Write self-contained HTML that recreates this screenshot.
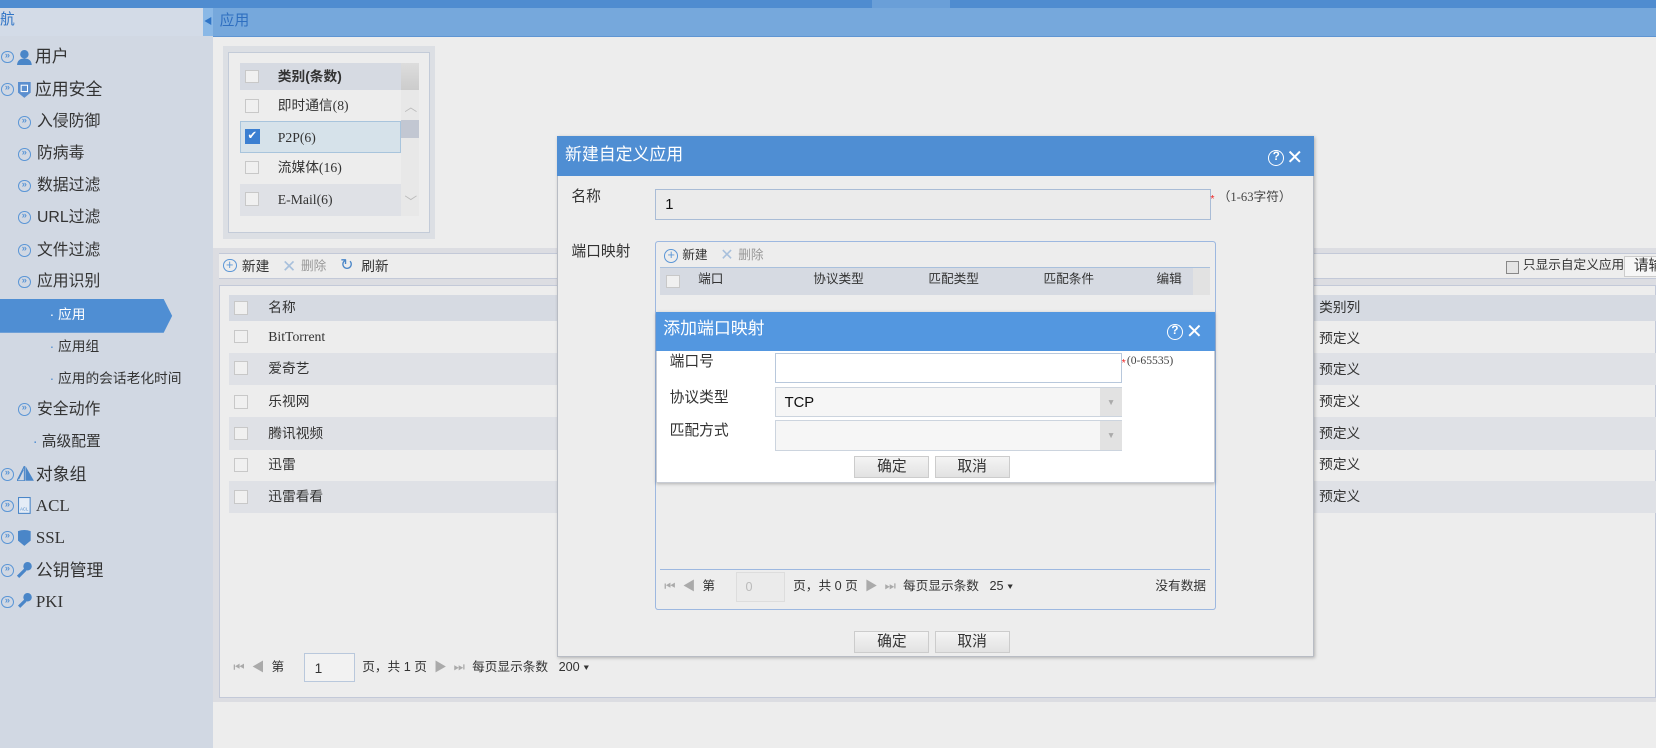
<!DOCTYPE html>
<html><head><meta charset="utf-8"><style>
*{margin:0;padding:0;box-sizing:border-box}
html,body{width:1656px;height:748px;overflow:hidden;background:#ededed}
#w{zoom:1.05612;width:1568px;height:708px;position:relative;font-family:"Liberation Sans","Noto Sans CJK SC",sans-serif;font-size:13px;line-height:1.25;color:#333;background:#ededed}
.a{position:absolute}
.sf{font-family:"Liberation Serif","Noto Sans CJK SC",serif}
.cb{position:absolute;width:13px;height:13px;border:1px solid #c8c8c8;background:#f0f0f0}
.circ{position:absolute;width:12px;height:12px;border:1.5px solid #5b96d6;border-radius:50%;font-size:9px;color:#5b96d6;line-height:8px;text-align:center;font-weight:bold}
.sb{position:absolute;font-size:15px;color:#333}
.btn{position:absolute;height:21px;width:71px;border:1px solid #ccc;background:linear-gradient(#f4f4f4,#e2e2e2);text-align:center;line-height:19px;font-size:14px;color:#333}
.pgr{position:absolute;font-size:12px;color:#333;white-space:nowrap}
</style></head><body><div id="w">
<div class="a" style="left:0;top:0;width:1568px;height:8px;background:#4f8cd0"></div>
<div class="a" style="left:826px;top:0;width:74px;height:8px;background:#6a9fd8"></div>
<div class="a" style="left:0;top:8px;width:202px;height:700px;background:#d1d8e3"></div>
<div class="a" style="left:0;top:8px;width:192px;height:26px;background:#d3dbe7;color:#2f74c6;font-size:14px;line-height:24px">航</div>
<div class="a" style="left:192px;top:8px;width:10px;height:26px;background:#8ab8e6;color:#2f74c6;font-size:8px;line-height:26px;text-align:center">◀</div>

<div class="circ" style="left:1px;top:48px">»</div>
<svg class="a" style="left:16px;top:46px" width="14" height="16"><circle cx="7" cy="5" r="4" fill="#4a86c8"/><path d="M0 16 Q0 9 7 9 Q14 9 14 16Z" fill="#4a86c8"/></svg>
<div class="sb" style="left:33px;top:44px;font-size:16px">用户</div>
<div class="circ" style="left:1px;top:79px">»</div>
<svg class="a" style="left:17px;top:77px" width="12" height="16"><path d="M0 1 H12 V11 L6 16 L0 11Z" fill="#5b8fcf"/><rect x="3" y="4" width="6" height="6" fill="none" stroke="#fff" stroke-width="1"/></svg>
<div class="sb" style="left:33px;top:75px;font-size:16px">应用安全</div>
<div class="circ" style="left:17px;top:110px">»</div><div class="sb" style="left:35px;top:106px">入侵防御</div>
<div class="circ" style="left:17px;top:140px">»</div><div class="sb" style="left:35px;top:136px">防病毒</div>
<div class="circ" style="left:17px;top:170px">»</div><div class="sb" style="left:35px;top:167px">数据过滤</div>
<div class="circ" style="left:17px;top:200px">»</div><div class="sb" style="left:35px;top:197px">URL过滤</div>
<div class="circ" style="left:17px;top:231px">»</div><div class="sb" style="left:35px;top:228px">文件过滤</div>
<div class="circ" style="left:17px;top:261px">»</div><div class="sb" style="left:35px;top:258px">应用识别</div>
<svg class="a" style="left:0;top:283px" width="164" height="32"><path d="M0 0 H155 L163 16 L155 32 H0Z" fill="#4f8ed3"/></svg>
<div class="sb" style="left:47px;top:290px;font-size:13px;color:#fff">· 应用</div>
<div class="sb" style="left:47px;top:320px;font-size:13px"><span style="color:#4f8ed3">·</span> 应用组</div>
<div class="sb" style="left:47px;top:350px;font-size:13px"><span style="color:#4f8ed3">·</span> 应用的会话老化时间</div>
<div class="circ" style="left:17px;top:382px">»</div><div class="sb" style="left:35px;top:379px">安全动作</div>
<div class="sb" style="left:31px;top:410px;font-size:14px"><span style="color:#4f8ed3">·</span> 高级配置</div>
<div class="circ" style="left:1px;top:443px">»</div>
<svg class="a" style="left:16px;top:441px" width="16" height="14"><path d="M0 14 L7 0 V14Z M1.5 12.5 L6 3.5" fill="none" stroke="#4a86c8"/><path d="M8 0 L16 14 H8Z" fill="#4a86c8"/></svg>
<div class="sb" style="left:34px;top:439px;font-size:16px">对象组</div>
<div class="circ" style="left:1px;top:473px">»</div>
<svg class="a" style="left:17px;top:471px" width="12" height="16"><rect x="0.5" y="0.5" width="11" height="15" fill="#e4ecf6" stroke="#4a86c8"/><text x="2" y="13" font-size="4" fill="#4a86c8">ACL</text></svg>
<div class="sb sf" style="left:34px;top:469px;font-size:16px">ACL</div>
<div class="circ" style="left:1px;top:503px">»</div>
<svg class="a" style="left:17px;top:501px" width="12" height="16"><path d="M0 2 Q6 0 12 2 V11 L6 16 L0 11Z" fill="#4a86c8"/></svg>
<div class="sb sf" style="left:34px;top:499px;font-size:16px">SSL</div>
<div class="circ" style="left:1px;top:534px">»</div>
<svg class="a" style="left:16px;top:531px" width="16" height="16"><circle cx="10" cy="5" r="4" fill="#4a86c8"/><path d="M8 8 L1 15" stroke="#4a86c8" stroke-width="3"/></svg>
<div class="sb" style="left:34px;top:530px;font-size:16px">公钥管理</div>
<div class="circ" style="left:1px;top:564px">»</div>
<svg class="a" style="left:16px;top:561px" width="16" height="16"><circle cx="10" cy="5" r="4" fill="#4a86c8"/><path d="M8 8 L2 14" stroke="#4a86c8" stroke-width="3"/></svg>
<div class="sb sf" style="left:34px;top:560px;font-size:16px">PKI</div>

<div class="a" style="left:202px;top:8px;width:1366px;height:27px;background:#76a8dc;border-bottom:1px solid #5f95d2"></div>
<div class="a" style="left:208px;top:11px;font-size:14px;color:#2f6fc0">应用</div>

<div class="a" style="left:211px;top:44px;width:201px;height:182px;background:#dcdfe4"></div>
<div class="a" style="left:216px;top:49px;width:191px;height:172px;border:1px solid #c3cbd8;background:#ededed"></div>
<div class="a" style="left:227px;top:60px;width:153px;height:25px;background:#d6dae2"></div>
<div class="a" style="left:380px;top:60px;width:17px;height:145px;background:#e8e8e8"></div>
<div class="a" style="left:380px;top:60px;width:17px;height:25px;background:linear-gradient(#ddd,#ccc)"></div>
<div class="a" style="left:380px;top:114px;width:17px;height:17px;background:#c2c7d2"></div>
<div class="a" style="left:383px;top:95px;font-size:12px;color:#bbb">︿</div>
<div class="a" style="left:383px;top:185px;font-size:12px;color:#bbb">﹀</div>
<div class="cb" style="left:232px;top:66px"></div><div class="a" style="left:263px;top:64px;font-weight:bold;font-size:13px">类别(条数)</div>
<div class="cb" style="left:232px;top:94px"></div><div class="a sf" style="left:263px;top:92px;font-size:13px">即时通信(8)</div>
<div class="a" style="left:227px;top:115px;width:153px;height:30px;background:#d6e2ea;border:1px solid #a8c4dc"></div>
<div class="a" style="left:232px;top:122px;width:14px;height:14px;background:#3b7fd1;color:#fff;font-size:11px;text-align:center;line-height:14px">✔</div>
<div class="a sf" style="left:263px;top:122px;font-size:13px">P2P(6)</div>
<div class="cb" style="left:232px;top:152px"></div><div class="a sf" style="left:263px;top:151px;font-size:13px">流媒体(16)</div>
<div class="a" style="left:227px;top:174px;width:153px;height:31px;background:#dfe1e6"></div>
<div class="cb" style="left:232px;top:182px"></div><div class="a sf" style="left:263px;top:181px;font-size:13px">E-Mail(6)</div>

<div class="a" style="left:202px;top:235px;width:1366px;height:430px;background:#dcdde2"></div>
<div class="a" style="left:207px;top:240px;width:1361px;height:24px;background:#ededed;border-top:1px solid #c3c9d8;border-bottom:1px solid #c3c9d8"></div>
<div class="circ" style="left:211px;top:245px;width:13px;height:13px;font-size:12px;line-height:10px;font-weight:normal">+</div>
<div class="a" style="left:229px;top:244px">新建</div>
<div class="a" style="left:267px;top:242px;color:#a8c0dc;font-size:16px">✕</div><div class="a" style="left:285px;top:245px;color:#999;font-size:12px">删除</div>
<div class="a" style="left:322px;top:242px;color:#4a86c8;font-size:15px">↻</div><div class="a" style="left:342px;top:244px">刷新</div>
<div class="a" style="left:1426px;top:247px;width:12px;height:12px;border:1px solid #888;background:#e4e4e4"></div>
<div class="a" style="left:1442px;top:244px;font-size:12px">只显示自定义应用</div>
<div class="a" style="left:1538px;top:242px;width:40px;height:20px;border:1px solid #ccc;background:#f6f6f6;font-size:14px;padding-left:8px">请输</div>

<div class="a" style="left:207px;top:270px;width:1361px;height:391px;background:#ededed;border:1px solid #c3c9d8"></div>
<div class="a" style="left:217px;top:279px;width:1351px;height:25px;background:#d6dae2"></div>
<div class="cb" style="left:222px;top:285px"></div><div class="a" style="left:254px;top:283px">名称</div><div class="a" style="left:1249px;top:283px">类别列</div>
<div class="a" style="left:217px;top:334px;width:1351px;height:31px;background:#dfe1e6"></div>
<div class="a" style="left:217px;top:395px;width:1351px;height:31px;background:#dfe1e6"></div>
<div class="a" style="left:217px;top:455px;width:1351px;height:31px;background:#dfe1e6"></div>
<div class="cb" style="left:222px;top:312px"></div><div class="a sf" style="left:254px;top:311px;font-size:13px">BitTorrent</div><div class="a" style="left:1249px;top:312px">预定义</div>
<div class="cb" style="left:222px;top:342px"></div><div class="a" style="left:254px;top:341px">爱奇艺</div><div class="a" style="left:1249px;top:342px">预定义</div>
<div class="cb" style="left:222px;top:374px"></div><div class="a" style="left:254px;top:372px">乐视网</div><div class="a" style="left:1249px;top:372px">预定义</div>
<div class="cb" style="left:222px;top:404px"></div><div class="a" style="left:254px;top:402px">腾讯视频</div><div class="a" style="left:1249px;top:402px">预定义</div>
<div class="cb" style="left:222px;top:434px"></div><div class="a" style="left:254px;top:432px">迅雷</div><div class="a" style="left:1249px;top:432px">预定义</div>
<div class="cb" style="left:222px;top:464px"></div><div class="a" style="left:254px;top:462px">迅雷看看</div><div class="a" style="left:1249px;top:462px">预定义</div>
<div class="pgr" style="left:221px;top:625px;color:#aaa">⏮ &nbsp;◀ &nbsp;<span style="color:#333">第</span></div>
<div class="a" style="left:288px;top:618px;width:48px;height:28px;border:1px solid #b9c8dc;background:#f2f2f2;padding:6px 0 0 9px">1</div>
<div class="pgr" style="left:343px;top:625px">页，共 1 页 &nbsp;<span style="color:#aaa">▶ &nbsp;⏭</span> &nbsp;每页显示条数 &nbsp; 200 ▾</div>

<div class="a" style="left:527px;top:129px;width:717px;height:493px;background:#ededed;border:1px solid #b8bcc4;box-shadow:1px 1px 3px rgba(0,0,0,.25)"></div>
<div class="a" style="left:527px;top:129px;width:717px;height:38px;background:#4f8ed3"></div>
<div class="a" style="left:535px;top:136px;font-size:16px;color:#fff">新建自定义应用</div>
<div class="a" style="left:1201px;top:142px;width:15px;height:15px;border:1.5px solid #fff;border-radius:50%;color:#fff;font-size:11px;text-align:center;line-height:12px;font-weight:bold">?</div>
<div class="a" style="left:1218px;top:138px;color:#fff;font-size:19px">✕</div>
<div class="a" style="left:541px;top:178px;font-size:14px">名称</div>
<div class="a" style="left:620px;top:179px;width:527px;height:29px;border:1px solid #a9bcd6;background:#ebebeb;padding:6px 0 0 9px;font-size:14px;color:#111">1</div>
<div class="a" style="left:1146px;top:183px;color:#e22;font-size:10px">*</div>
<div class="a sf" style="left:1153px;top:180px;font-size:12px;color:#444">（1-63字符）</div>
<div class="a" style="left:541px;top:230px;font-size:14px">端口映射</div>
<div class="a" style="left:620px;top:228px;width:531px;height:350px;border:1px solid #9db8e0;border-radius:3px"></div>
<div class="circ" style="left:629px;top:236px;width:13px;height:13px;font-size:12px;line-height:10px;font-weight:normal">+</div>
<div class="a" style="left:646px;top:235px;font-size:12px">新建</div>
<div class="a" style="left:682px;top:233px;color:#a8c0dc;font-size:15px">✕</div><div class="a" style="left:699px;top:235px;color:#999;font-size:12px">删除</div>
<div class="a" style="left:625px;top:253px;width:521px;height:26px;background:#d6dae2;border-top:1px solid #a9c0dc"></div>
<div class="a" style="left:1130px;top:254px;width:16px;height:25px;background:#e2e2e2"></div>
<div class="cb" style="left:631px;top:260px"></div>
<div class="a" style="left:661px;top:258px;font-size:12px">端口</div>
<div class="a" style="left:770px;top:258px;font-size:12px">协议类型</div>
<div class="a" style="left:879px;top:258px;font-size:12px">匹配类型</div>
<div class="a" style="left:988px;top:258px;font-size:12px">匹配条件</div>
<div class="a" style="left:1095px;top:258px;font-size:12px">编辑</div>
<div class="a" style="left:625px;top:539px;width:521px;height:1px;background:#9db8e0"></div>
<div class="pgr" style="left:629px;top:548px;color:#aaa">⏮ &nbsp;◀ &nbsp;<span style="color:#333">第</span></div>
<div class="a" style="left:697px;top:542px;width:46px;height:28px;border:1px solid #ddd;background:#ebebeb;color:#bbb;padding:6px 0 0 8px;font-size:12px">0</div>
<div class="pgr" style="left:751px;top:548px">页，共 0 页 &nbsp;<span style="color:#aaa">▶ &nbsp;⏭</span> &nbsp;每页显示条数 &nbsp; 25 ▾</div>
<div class="pgr" style="left:1094px;top:548px">没有数据</div>
<div class="btn" style="left:809px;top:597px">确定</div>
<div class="btn" style="left:885px;top:597px">取消</div>

<div class="a" style="left:621px;top:295px;width:529px;height:162px;background:#fff;border:1px solid #c8ccd4;box-shadow:0 1px 3px rgba(0,0,0,.25)"></div>
<div class="a" style="left:621px;top:295px;width:529px;height:37px;background:#5397e0"></div>
<div class="a" style="left:628px;top:301px;font-size:16px;color:#fff">添加端口映射</div>
<div class="a" style="left:1105px;top:307px;width:15px;height:15px;border:1.5px solid #fff;border-radius:50%;color:#fff;font-size:11px;text-align:center;line-height:12px;font-weight:bold">?</div>
<div class="a" style="left:1123px;top:303px;color:#fff;font-size:19px">✕</div>
<div class="a" style="left:634px;top:334px;font-size:14px">端口号</div>
<div class="a" style="left:734px;top:334px;width:328px;height:29px;border:1px solid #b8c8dc;background:#fff"></div>
<div class="a" style="left:1062px;top:338px;color:#e22;font-size:10px">*</div>
<div class="a sf" style="left:1067px;top:335px;font-size:11px;color:#444">(0-65535)</div>
<div class="a" style="left:634px;top:368px;font-size:14px">协议类型</div>
<div class="a" style="left:734px;top:366px;width:328px;height:29px;border:1px solid #ccd4de;background:#f6f6f6;padding:6px 0 0 8px;font-size:14px;color:#111">TCP</div>
<div class="a" style="left:1042px;top:367px;width:20px;height:27px;background:#e2e2e2;color:#aaa;font-size:8px;text-align:center;line-height:27px">▼</div>
<div class="a" style="left:634px;top:400px;font-size:14px">匹配方式</div>
<div class="a" style="left:734px;top:398px;width:328px;height:29px;border:1px solid #ccd4de;background:#f6f6f6"></div>
<div class="a" style="left:1042px;top:399px;width:20px;height:27px;background:#e2e2e2;color:#aaa;font-size:8px;text-align:center;line-height:27px">▼</div>
<div class="btn" style="left:809px;top:432px">确定</div>
<div class="btn" style="left:885px;top:432px">取消</div>
</div></body></html>
